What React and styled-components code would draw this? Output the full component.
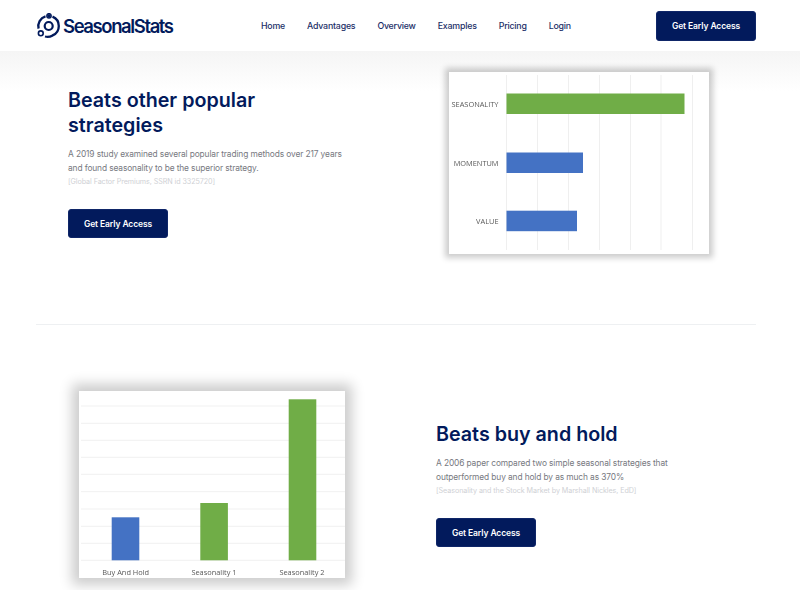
import styled, { createGlobalStyle } from "styled-components";

const GlobalStyle = createGlobalStyle`
  html, body {
    margin: 0;
    padding: 0;
    background: #fff;
    font-family: Inter, "Noto Sans", sans-serif;
  }
  * {
    box-sizing: border-box;
  }
`;

const NAVY = "#021a5c";
const GREEN = "#70ad47";
const BLUE = "#4472c4";

const Navbar = styled.header`
  height: 51px;
  padding: 0 44px 0 36px;
  display: flex;
  align-items: center;
  background: #fff;
`;

const Logo = styled.a`
  display: flex;
  align-items: center;
  gap: 2px;
  width: 225px;
  color: ${NAVY};
  font-size: 18.5px;
  font-weight: 600;
  letter-spacing: -1.4px;
`;

const NavLinks = styled.nav`
  display: flex;
  gap: 22px;
  flex: 1;
`;

const NavLink = styled.a`
  color: #1c2f68;
  font-size: 8.8px;
  font-weight: 500;
  letter-spacing: -0.2px;
  line-height: 14px;
`;

const Button = styled.a`
  display: flex;
  align-items: center;
  justify-content: center;
  width: 100px;
  height: ${(p) => p.$height}px;
  background: ${NAVY};
  border: 1px solid #0f2668;
  border-radius: 3px;
  color: #fff;
  font-size: 8.5px;
  font-weight: 600;
  letter-spacing: -0.1px;
`;

const Section = styled.section`
  display: grid;
  grid-template-columns: 1fr 1fr;
  align-items: center;
  margin: 0 44px 0 36px;
  padding: ${(p) => p.$padding};
  border-bottom: ${(p) => (p.$divider ? "1px solid #eef0f2" : "none")};
`;

const Fade = styled.div`
  background: linear-gradient(#f5f5f5, #fff 40px);
`;

const TextBlock = styled.div`
  padding-left: ${(p) => p.$indent}px;
`;

const Heading = styled.h2`
  margin: 0 0 9px;
  color: ${NAVY};
  font-size: 19.7px;
  font-weight: 600;
  line-height: 25px;
`;

const Body = styled.p`
  margin: 0;
  color: #77797f;
  font-size: 8.4px;
  letter-spacing: -0.12px;
  line-height: 14.3px;
`;

const Cite = styled.div`
  margin-bottom: 20px;
  color: #cfd1d5;
  font-size: 7.2px;
  letter-spacing: -0.08px;
  line-height: 14px;
`;

const ChartFrame = styled.div`
  width: ${(p) => p.$width}px;
  height: ${(p) => p.$height}px;
  margin-left: ${(p) => p.$offset}px;
  background: #fff;
  box-shadow: ${(p) => p.$shadow};
  svg {
    display: block;
    filter: blur(0.4px);
  }
`;

const ChartLabel = styled.text`
  fill: #595959;
  font-family: "Open Sans", sans-serif;
  font-size: ${(p) => p.$size}px;
`;

const LogoMark = () => (
  <svg width="25" height="26" viewBox="0 0 25 26" fill="none" stroke={NAVY} strokeWidth="2.3">
    <path d="M9.5 3.4A10.2 10.2 0 0 0 2.6 15.6" />
    <path d="M16.5 3.6A10.2 10.2 0 0 1 16.6 22.4A10.2 10.2 0 0 1 9 23.5" />
    <circle cx="12.7" cy="13" r="4" strokeWidth="2.2" />
    <circle cx="13" cy="2.8" r="1.9" fill={NAVY} stroke="none" />
    <circle cx="13" cy="2.8" r="2.2" strokeWidth="1.4" />
    <circle cx="4.8" cy="20.3" r="2.4" strokeWidth="1.6" />
  </svg>
);

const STRATEGY_GRID = [57.5, 88.5, 119.5, 150.5, 181.5, 212, 243.5];
const STRATEGY_BARS = [
  { label: "SEASONALITY", y: 21.5, w: 178, color: GREEN },
  { label: "MOMENTUM", y: 80.5, w: 76.5, color: BLUE },
  { label: "VALUE", y: 138.7, w: 70.5, color: BLUE },
];

const StrategyChart = () => (
  <svg width="260" height="182" viewBox="0 0 260 182">
    {STRATEGY_GRID.map((x) => (
      <line key={x} x1={x} x2={x} y1="3" y2="178" stroke="#efefef" />
    ))}
    {STRATEGY_BARS.map((b) => (
      <g key={b.label}>
        <rect x="57.5" y={b.y} width={b.w} height="20.5" fill={b.color} />
        <ChartLabel $size={7.4} x="49.5" y={b.y + 13} textAnchor="end">
          {b.label}
        </ChartLabel>
      </g>
    ))}
  </svg>
);

const RETURN_GRID = [15, 32.3, 49.3, 66.3, 83.3, 100.7, 118, 135.3, 152.3, 169.3];
const RETURN_BARS = [
  { label: "Buy And Hold", x: 32.7, y: 126.3, labelX: 46.7, color: BLUE },
  { label: "Seasonality 1", x: 121.3, y: 112, labelX: 135, color: GREEN },
  { label: "Seasonality 2", x: 209.7, y: 8.3, labelX: 223, color: GREEN },
];

const ReturnChart = () => (
  <svg width="266" height="187" viewBox="0 0 266 187">
    {RETURN_GRID.map((y) => (
      <line key={y} x1="2" x2="266" y1={y} y2={y} stroke="#f1f1f1" />
    ))}
    {RETURN_BARS.map((b) => (
      <g key={b.label}>
        <rect x={b.x} y={b.y} width="27.6" height={169.3 - b.y} fill={b.color} />
        <ChartLabel $size={7.4} x={b.labelX} y="183.5" textAnchor="middle">
          {b.label}
        </ChartLabel>
      </g>
    ))}
  </svg>
);

export default function App() {
  return (
    <>
      <GlobalStyle />
      <Navbar>
        <Logo>
          <LogoMark />
          SeasonalStats
        </Logo>
        <NavLinks>
          {["Home", "Advantages", "Overview", "Examples", "Pricing", "Login"].map((item) => (
            <NavLink key={item}>{item}</NavLink>
          ))}
        </NavLinks>
        <Button $height={30}>Get Early Access</Button>
      </Navbar>
      <Fade>
        <Section $divider $padding="21px 0 70px">
          <TextBlock $indent={32}>
            <Heading>
              Beats other popular
              <br />
              strategies
            </Heading>
            <Body>
              A 2019 study examined several popular trading methods over 217 years
              <br />
              and found seasonality to be the superior strategy.
            </Body>
            <Cite>[Global Factor Premiums, SSRN id 3325720]</Cite>
            <Button $height={29}>Get Early Access</Button>
          </TextBlock>
          <ChartFrame $width={260} $height={182} $offset={53} $shadow="0 0 6px 4px rgba(0,0,0,0.2)">
            <StrategyChart />
          </ChartFrame>
        </Section>
      </Fade>
      <Section $padding="66px 0 12px">
        <ChartFrame $width={266} $height={187} $offset={43} $shadow="0 0 12px 7px rgba(0,0,0,0.2)">
          <ReturnChart />
        </ChartFrame>
        <TextBlock $indent={40}>
          <Heading>Beats buy and hold</Heading>
          <Body>
            A 2006 paper compared two simple seasonal strategies that
            <br />
            outperformed buy and hold by as much as 370%
          </Body>
          <Cite>[Seasonality and the Stock Market by Marshall Nickles, EdD]</Cite>
          <Button $height={29}>Get Early Access</Button>
        </TextBlock>
      </Section>
    </>
  );
}
